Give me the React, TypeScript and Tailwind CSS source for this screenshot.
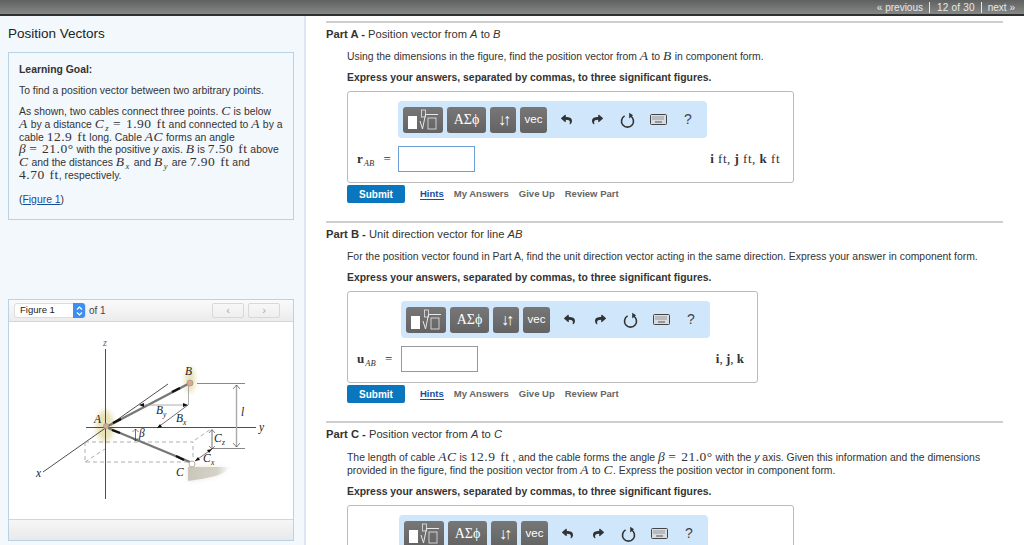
import React from "react";
import { FaReply, FaShare } from "react-icons/fa";

const sans = { fontFamily: '"Liberation Sans", Arial, sans-serif' };

const M: React.FC<{ children: React.ReactNode; i?: boolean }> = ({ children, i }) => (
  <span className={`font-['Liberation_Serif',serif] text-[13.5px] leading-[10px] tracking-[0.5px] [word-spacing:1px] ${i ? "italic" : ""}`}>{children}</span>
);

const Sub: React.FC<{ children: React.ReactNode }> = ({ children }) => (
  <span className="relative top-[3px] mr-[1px] ml-[1px] text-[8.5px] leading-none italic">{children}</span>
);

const TemplateIcon = () => (
  <svg width="32" height="22" viewBox="0 0 32 22" fill="none">
    <rect x="1" y="7" width="9" height="13" fill="#fff" />
    <rect x="14.5" y="1" width="4" height="7" stroke="#e8e8e8" strokeWidth="0.8" />
    <path d="M13 12l2.500 8 3-14.500H31" stroke="#e8e8e8" strokeWidth="1" />
    <rect x="21" y="9" width="8" height="11" stroke="#e8e8e8" strokeWidth="0.8" />
  </svg>
);

const KeyboardIcon = () => (
  <svg width="17" height="11" viewBox="0 0 17 11">
    <rect x="0.5" y="0.5" width="16" height="10" rx="1" fill="#d8dde2" stroke="#444" />
    <path d="M2.500 3h12M2.500 5h12" stroke="#555" strokeWidth="1" strokeDasharray="1 1" />
    <path d="M5 8h7" stroke="#555" strokeWidth="1" />
  </svg>
);

const ResetIcon = () => (
  <svg width="15" height="16" viewBox="0 0 15 16" fill="none">
    <path d="M4.600 3.900a6 6 0 1 0 5.800 0" stroke="#333" strokeWidth="1.600" />
    <path d="M9.200 0.800v5.600l3.800-3.200z" fill="#333" />
  </svg>
);

const SelectArrows = () => (
  <svg width="7" height="10" viewBox="0 0 7 10" fill="none" stroke="#fff" strokeWidth="1.200">
    <path d="M1 3.500l2.500-2.500 2.500 2.500M1 6.500l2.500 2.500 2.500-2.500" />
  </svg>
);

const Toolbar: React.FC = () => (
  <div className="flex h-[37px] w-[309px] items-center rounded-[4px] bg-[#cfe6fb] pl-[5px]">
    <div className="flex h-[26px] w-[40px] items-center justify-center rounded-[3px] bg-gradient-to-b from-[#777777] to-[#636363]">
      <TemplateIcon />
    </div>
    <div className="ml-[4px] flex h-[26px] w-[39px] items-center justify-center rounded-[3px] bg-gradient-to-b from-[#777777] to-[#636363] font-['Liberation_Serif',serif] text-[14px] text-white">
      ΑΣϕ
    </div>
    <div className="ml-[4px] flex h-[26px] w-[26px] items-center justify-center rounded-[3px] bg-gradient-to-b from-[#777777] to-[#636363] text-[16px] tracking-[-3px] text-white">
      ↓↑
    </div>
    <div className="ml-[4px] flex h-[26px] w-[27px] items-center justify-center rounded-[3px] bg-gradient-to-b from-[#777777] to-[#636363] text-[11.5px] text-white">
      vec
    </div>
    <div className="ml-[13px] flex w-[12px] justify-center text-[#333]"><FaReply size={11} /></div>
    <div className="ml-[19px] flex w-[12px] justify-center text-[#333]"><FaShare size={11} /></div>
    <div className="ml-[17px] flex w-[15px] justify-center"><ResetIcon /></div>
    <div className="ml-[15px] flex w-[17px] justify-center"><KeyboardIcon /></div>
    <div className="ml-[17px] w-[8px] text-center text-[14px] text-[#444]">?</div>
  </div>
);

const Links: React.FC = () => (
  <div className="mt-[2px] flex h-[18px] items-center">
    <button className="h-[18px] w-[58px] rounded-[2px] bg-[#0a76bd] text-[10px] font-bold text-white">Submit</button>
    <span className="ml-[15px] border-b border-[#1b4b9b] text-[9.5px] leading-[11px] font-bold text-[#1b4b9b]">Hints</span>
    <span className="ml-[10px] text-[9.5px] font-bold text-[#666]">My Answers</span>
    <span className="ml-[10px] text-[9.5px] font-bold text-[#666]">Give Up</span>
    <span className="ml-[10px] text-[9.5px] font-bold text-[#666]">Review Part</span>
  </div>
);

const PartHead: React.FC<{ letter: string; children: React.ReactNode }> = ({ letter, children }) => (
  <div className="border-t-2 border-[#cfcfcf] pt-[4px] text-[11.2px] leading-[15px] text-[#333]">
    <b>Part {letter} - </b>
    {children}
  </div>
);

const Express = () => (
  <p className="pl-[21px] text-[10.4px] leading-[13px] font-bold text-[#333]">
    Express your answers, separated by commas, to three significant figures.
  </p>
);

const Figure: React.FC = () => (
  <svg width="284" height="197" viewBox="9 322 284 197" fill="none" className="block bg-white">
    <defs>
      <linearGradient id="ground" x1="0" y1="0" x2="1" y2="0">
        <stop offset="0" stopColor="#c9c7bb" />
        <stop offset="0.7" stopColor="#d5d3c9" />
        <stop offset="1" stopColor="#ffffff" />
      </linearGradient>
      <filter id="soft" x="-50%" y="-50%" width="200%" height="200%">
        <feGaussianBlur stdDeviation="2.500" />
      </filter>
    </defs>
    <ellipse cx="105" cy="426" rx="9" ry="16" fill="#e8e2b8" filter="url(#soft)" />
    <ellipse cx="190" cy="380" rx="5" ry="13" fill="#e8e2b8" filter="url(#soft)" />
    <path d="M188 467h42c-6 8-20 11-42 14z" fill="url(#ground)" filter="url(#soft)" opacity="0.5" />
    <path d="M188 467h42c-6 8-20 11-42 14z" fill="url(#ground)" />
    <path d="M105.500 349v150M86 427.500h170M43 472L168 384" stroke="#222" strokeWidth="0.8" />
    <path d="M85 442h108v18M85 442v20h105M85 462l20-13M195 440l16-11" stroke="#999" strokeWidth="0.8" strokeDasharray="4 3" />
    <path d="M108 426L188 384" stroke="#777" strokeWidth="2.400" />
    <path d="M113 423l8-4M172 392l8-4" stroke="#111" strokeWidth="2.400" />
    <path d="M108 428L190 462" stroke="#777" strokeWidth="2.400" />
    <path d="M112 430l8 3M176 456l8 4" stroke="#111" strokeWidth="2.400" />
    <path d="M188.500 385v20M140 405h47" stroke="#999" strokeWidth="0.8" />
    <path d="M188 405L157 428M195 461l17-12M212 430v19M135.500 429v12" stroke="#333" strokeWidth="0.7" />
    <path d="M197 383.500h48M212 448.500h33" stroke="#555" strokeWidth="0.7" />
    <path d="M236.500 385v62" stroke="#aaa" strokeWidth="1.400" />
    <path d="M233 389l3.500-4 3.500 4M233 443l3.500 4 3.500-4M209 433l3-3.500 3 3.500M209 446l3 3 3-3M132.500 432l3-3 3 3M132.500 438l3 3 3-3" stroke="#333" strokeWidth="0.6" />
    <path d="M188 405l-5-2v4zM157 428l5-1-2-3zM212 449l-5 1 2 3zM195 461l5-1-2-3zM139 405l5-2v4z" fill="#111" />
    <circle cx="190" cy="383" r="3" fill="#d8a999" stroke="#a97" strokeWidth="0.8" />
    <circle cx="106" cy="426" r="2.500" fill="#d8a999" stroke="#a97" strokeWidth="0.8" />
    <circle cx="192" cy="464" r="3" fill="#fff" stroke="#a97" strokeWidth="0.8" />
    <g fill="#222" fontFamily="Liberation Serif, serif" fontStyle="italic" fontSize="11.500">
      <text x="103" y="346" fontSize="10" fill="#666">z</text>
      <text x="185" y="375">B</text>
      <text x="94" y="423">A</text>
      <text x="156" y="414">B</text>
      <text x="163" y="417" fontSize="7.500">y</text>
      <text x="176" y="422">B</text>
      <text x="183" y="425" fontSize="7.500">x</text>
      <text x="241" y="416">l</text>
      <text x="259" y="431">y</text>
      <text x="139" y="437">β</text>
      <text x="214" y="442">C</text>
      <text x="222" y="445" fontSize="7.500">z</text>
      <text x="203" y="462">C</text>
      <text x="211" y="465" fontSize="7.500">x</text>
      <text x="176" y="476">C</text>
      <text x="36" y="477">x</text>
    </g>
  </svg>
);

const App: React.FC = () => {
  return (
    <div style={sans} className="flex h-[545px] w-[1024px] flex-col overflow-hidden bg-white text-[#333]">
      <header className="flex h-[16px] shrink-0 items-center justify-end border-b-2 border-[#2f3030] bg-gradient-to-b from-[#5f6060] to-[#868886] pr-[9px] text-[10px] text-[#e8e8e8]">
        <span>« previous</span>
        <span className="mr-[7px] ml-[6px] h-[11px] border-l border-[#e8e8e8]" />
        <span className="tracking-[0.2px]">12 of 30</span>
        <span className="mx-[6px] h-[11px] border-l border-[#e8e8e8]" />
        <span>next »</span>
      </header>

      <div className="flex min-h-0 flex-1">
        <aside className="w-[306px] shrink-0 border-r-2 border-[#dbe7f2] bg-[#f3f8fd] pl-[8px]">
          <h1 className="mt-[9px] text-[13.5px] leading-[17px] text-[#222]">Position Vectors</h1>
          <section className="mt-[10px] h-[168px] w-[286px] border border-[#b9d2e6] pt-[10px] pr-[4px] pl-[10px] text-[10.4px] leading-[12.8px] text-[#333]">
            <p className="leading-[13px] font-bold">Learning Goal:</p>
            <p className="mt-[8px] leading-[13px]">To find a position vector between two arbitrary points.</p>
            <p className="mt-[9px]">
              As shown, two cables connect three points. <M i>C</M> is below<br />
              <M i>A</M> by a distance <M i>C<Sub>z</Sub></M> <M>= 1.90 ft</M> and connected to <M i>A</M> by a<br />
              cable <M>12.9 ft</M> long. Cable <M i>AC</M> forms an angle<br />
              <M i>β</M> <M>= 21.0°</M> with the positive <i>y</i> axis. <M i>B</M> is <M>7.50 ft</M> above<br />
              <M i>C</M> and the distances <M i>B<Sub>x</Sub></M> and <M i>B<Sub>y</Sub></M> are <M>7.90 ft</M> and<br />
              <M>4.70 ft</M>, respectively.
            </p>
            <p className="mt-[11px]">
              (<span className="text-[#1b4b9b] underline">Figure 1</span>)
            </p>
          </section>
          <section className="mt-[79px] w-[286px] border border-[#b9d2e6] bg-white">
            <div className="flex h-[22px] items-center border-b border-[#c9d8e4] bg-gradient-to-b from-[#fafafa] to-[#ececec] pr-[13px] pl-[5px]">
              <div className="flex h-[15px] w-[72px] shrink-0 items-center justify-between rounded-[3px] border border-[#ddd] bg-white pl-[5px] text-[9.5px] text-[#222]">
                Figure 1
                <span className="flex h-[15px] w-[12px] items-center justify-center rounded-r-[3px] bg-[#3d8ef0]"><SelectArrows /></span>
              </div>
              <span className="ml-[3px] text-[10px] whitespace-nowrap text-[#444]">of 1</span>
              <div className="ml-auto flex h-[15px] w-[32px] items-center justify-center rounded-[2px] border border-[#d8d8d8] text-[11px] text-[#aaa]">‹</div>
              <div className="ml-[4px] flex h-[15px] w-[32px] items-center justify-center rounded-[2px] border border-[#d8d8d8] text-[11px] text-[#aaa]">›</div>
            </div>
            <Figure />
            <div className="h-[21px] border-t border-[#c9d8e4] bg-gradient-to-b from-[#f6f6f6] to-[#e9e9e9]" />
          </section>
        </aside>

        <main className="min-w-0 flex-1 pt-[5px] pr-[21px] pl-[20px]">
          {/* Part A */}
          <div className="h-[200px]">
            <PartHead letter="A">Position vector from <i>A</i> to <i>B</i></PartHead>
            <p className="mt-[8px] pl-[21px] text-[10.4px] leading-[13px]">
              Using the dimensions in the figure, find the position vector from <M i>A</M> to <M i>B</M> in component form.
            </p>
            <div className="mt-[8px]"><Express /></div>
            <div className="mt-[7px] ml-[21px] h-[92px] w-[447px] rounded-[3px] border border-[#bbb] pt-[9px] pl-[50px]">
              <Toolbar />
              <div className="relative mt-[8px] flex h-[26px] items-center justify-between pr-[13px]">
                <span className="absolute left-[-41px] font-['Liberation_Serif',serif] text-[13px] whitespace-nowrap"><b>r</b><Sub>AB</Sub> <span className="ml-[5px]">=</span></span>
                <div className="h-[26px] w-[77px] border border-[#6f9fd8] bg-white" />
                <span className="font-['Liberation_Serif',serif] text-[13px] tracking-[0.5px]"><b>i</b> ft, <b>j</b> ft, <b>k</b> ft</span>
              </div>
            </div>
            <div className="ml-[21px]"><Links /></div>
          </div>

          {/* Part B */}
          <div className="h-[200px]">
            <PartHead letter="B">Unit direction vector for line <i>AB</i></PartHead>
            <p className="mt-[8px] pl-[21px] text-[10.4px] leading-[13px]">
              For the position vector found in Part A, find the unit direction vector acting in the same direction. Express your answer in component form.
            </p>
            <div className="mt-[8px]"><Express /></div>
            <div className="mt-[7px] ml-[21px] h-[92px] w-[411px] rounded-[3px] border border-[#bbb] pt-[9px] pl-[53px]">
              <Toolbar />
              <div className="relative mt-[8px] flex h-[26px] items-center justify-between pr-[13px]">
                <span className="absolute left-[-44px] font-['Liberation_Serif',serif] text-[13px] whitespace-nowrap"><b>u</b><Sub>AB</Sub> <span className="ml-[5px]">=</span></span>
                <div className="h-[26px] w-[77px] border border-[#999] bg-white" />
                <span className="font-['Liberation_Serif',serif] text-[13px]"><b>i</b>, <b>j</b>, <b>k</b></span>
              </div>
            </div>
            <div className="ml-[21px]"><Links /></div>
          </div>

          {/* Part C */}
          <div>
            <PartHead letter="C">Position vector from <i>A</i> to <i>C</i></PartHead>
            <p className="mt-[9px] pl-[21px] text-[10.4px] leading-[13px]">
              The length of cable <M i>AC</M> is <M>12.9 ft</M> , and the cable forms the angle <M i>β</M> <M>= 21.0°</M> with the <i>y</i> axis. Given this information and the dimensions<br />
              provided in the figure, find the position vector from <M i>A</M> to <M i>C</M>. Express the position vector in component form.
            </p>
            <div className="mt-[8px]"><Express /></div>
            <div className="mt-[7px] ml-[21px] h-[92px] w-[447px] rounded-[3px] border border-[#bbb] pt-[9px] pl-[51px]">
              <Toolbar />
            </div>
          </div>
        </main>
      </div>
    </div>
  );
};

export default App;
